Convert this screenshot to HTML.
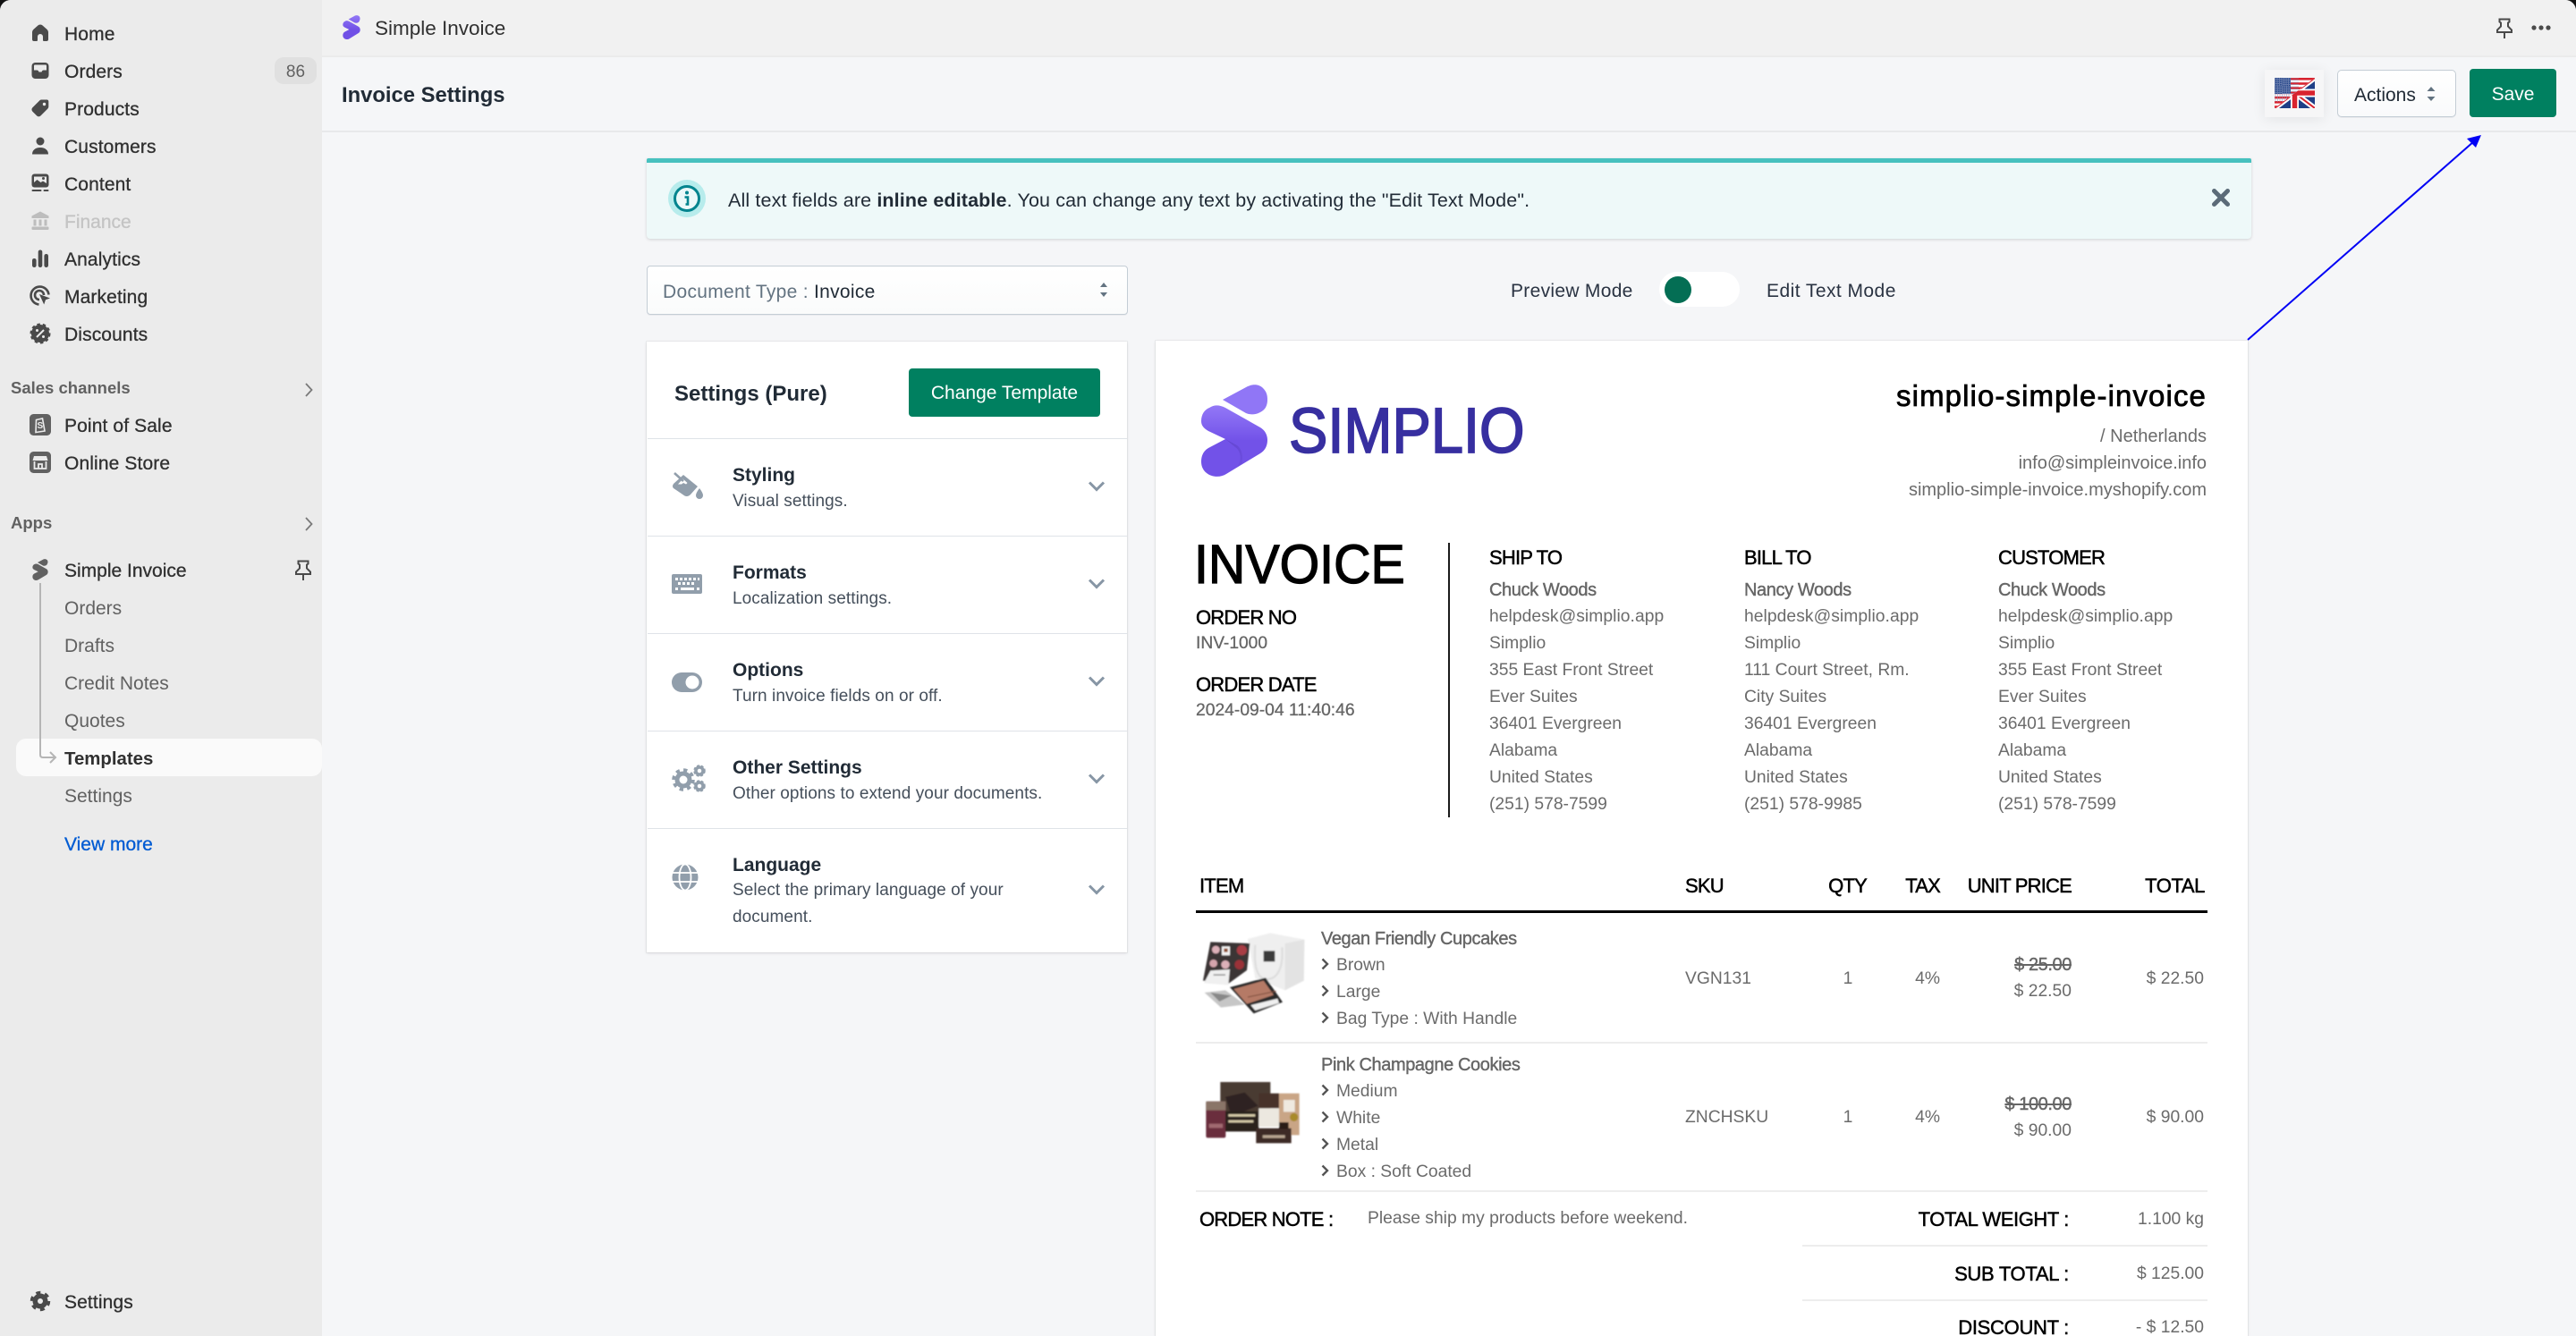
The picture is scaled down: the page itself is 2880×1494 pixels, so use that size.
<!DOCTYPE html>
<html lang="en"><head><meta charset="utf-8"><title>Invoice Settings</title>
<style>
*{box-sizing:border-box}
html,body{margin:0;padding:0;width:2880px;height:1494px;overflow:hidden;background:#111}
#app{position:absolute;left:0;top:0;width:2880px;height:1494px;background:#f5f6f8;border-radius:12px 12px 0 0;overflow:hidden;font-family:"Liberation Sans",sans-serif;color:#212b36}
.t{position:absolute;white-space:nowrap;line-height:40px;height:40px;margin-top:1.5px}
.b{position:absolute}
svg{position:absolute;overflow:visible}
.nav{font-size:21px;color:#303030;left:72px;letter-spacing:.12px;-webkit-text-stroke:.3px #303030}
.sub{font-size:21px;color:#616161;left:72px}
.sec{font-size:18.5px;font-weight:bold;color:#616161;left:12px}
.stit{font-size:21px;font-weight:bold;left:819px;color:#212b36}
.ssub{font-size:19px;left:819px;color:#454f5b;letter-spacing:.08px}
.h{font-size:22px;color:#000;-webkit-text-stroke:.5px #000;letter-spacing:-.8px}
.g{font-size:19.3px;color:#6b6b6b}
.g20{font-size:20px;color:#6b6b6b}
.gb{font-size:20px;color:#666;-webkit-text-stroke:.4px #666;letter-spacing:-.4px}
.r{text-align:right}
.div{position:absolute;height:2px;background:#ededed}
</style></head><body>
<div id="app">

<!-- sidebar -->
<div class="b" style="left:0;top:0;width:360px;height:1494px;background:#ebebeb"></div>

<svg style="left:33px;top:25px" width="24" height="24" viewBox="0 0 24 24"><path fill="#4a4a4a" d="M12 2.500c-1 0-1.900.4-2.600 1L4.600 7.700C3.400 8.800 3 10 3 11.400V19a2 2 0 0 0 2 2h3a1 1 0 0 0 1-1v-4a3 3 0 0 1 6 0v4a1 1 0 0 0 1 1h3a2 2 0 0 0 2-2v-7.600c0-1.400-.4-2.600-1.600-3.700L14.600 3.500c-.7-.6-1.600-1-2.600-1z"/></svg>
<div class="t nav" style="top:17px">Home</div>

<svg style="left:33px;top:67px" width="24" height="24" viewBox="0 0 24 24"><rect x="2.500" y="3" width="19" height="18" rx="4" fill="#4a4a4a"/><path fill="#ebebeb" d="M5 6.500a1 1 0 0 1 1-1h12a1 1 0 0 1 1 1v5h-3.500c-.8 0-1.200.5-1.500 1l-.5 1h-3l-.5-1c-.3-.5-.7-1-1.500-1H5z"/></svg>
<div class="t nav" style="top:59px">Orders</div>
<div class="b" style="left:307px;top:64px;width:47px;height:30px;border-radius:10px;background:#e0e0e0"></div>
<div class="t" style="left:307px;width:47px;top:59px;text-align:center;font-size:19px;color:#616161">86</div>

<svg style="left:33px;top:109px" width="24" height="24" viewBox="0 0 24 24"><path fill="#4a4a4a" d="M20 2.500h-6.500c-.9 0-1.700.3-2.300 1l-7.900 7.900a3 3 0 0 0 0 4.200l4.900 4.900a3 3 0 0 0 4.200 0l7.900-7.900c.6-.6 1-1.500 1-2.300V4.500a2 2 0 0 0-1.300-2z"/><circle cx="16.500" cy="7.500" r="1.700" fill="#ebebeb"/></svg>
<div class="t nav" style="top:101px">Products</div>

<svg style="left:33px;top:151px" width="24" height="24" viewBox="0 0 24 24"><circle cx="12" cy="7" r="4.500" fill="#4a4a4a"/><path fill="#4a4a4a" d="M3 21.500c0-4.500 3.500-7.500 9-7.500s9 3 9 7.500z"/></svg>
<div class="t nav" style="top:143px">Customers</div>

<svg style="left:33px;top:193px" width="24" height="24" viewBox="0 0 24 24"><rect x="2.500" y="1.500" width="19" height="15" rx="3" fill="#4a4a4a"/><path fill="#ebebeb" d="M5 11l3.500-3 4 3 2.500-1.500 4 2.500v-7.500H5z"/><circle cx="15.500" cy="6.500" r="1.500" fill="#4a4a4a"/><rect x="2.500" y="19" width="11" height="2" rx="1" fill="#4a4a4a"/><rect x="15.500" y="19" width="6" height="2" rx="1" fill="#4a4a4a"/></svg>
<div class="t nav" style="top:185px">Content</div>

<svg style="left:33px;top:235px" width="24" height="24" viewBox="0 0 24 24"><g fill="#bdbdbd"><path d="M12 1.500l9.500 5v2.500h-19V6.500z"/><rect x="2.500" y="18.500" width="19" height="3.500" rx="1"/><rect x="4.500" y="10.500" width="3" height="7"/><rect x="10.500" y="10.500" width="3" height="7"/><rect x="16.500" y="10.500" width="3" height="7"/></g></svg>
<div class="t" style="left:72px;top:227px;font-size:21px;color:#c4c4c4;-webkit-text-stroke:.3px #c4c4c4">Finance</div>

<svg style="left:33px;top:277px" width="24" height="24" viewBox="0 0 24 24"><g fill="#4a4a4a"><rect x="3" y="12" width="4.600" height="10" rx="2.300"/><rect x="9.700" y="2.500" width="4.600" height="19.500" rx="2.300"/><rect x="16.400" y="7" width="4.600" height="15" rx="2.300"/></g></svg>
<div class="t nav" style="top:269px">Analytics</div>

<svg style="left:33px;top:319px" width="24" height="24" viewBox="0 0 24 24"><path fill="none" stroke="#4a4a4a" stroke-width="2.600" d="M10.500 21.500A10 10 0 1 1 21.500 10.500"/><path fill="none" stroke="#4a4a4a" stroke-width="2.600" d="M11 16a5 5 0 1 1 5-5"/><path fill="#4a4a4a" d="M11 10l12 4.500-5 1.700-1.800 5.300z"/></svg>
<div class="t nav" style="top:311px">Marketing</div>

<svg style="left:33px;top:361px" width="24" height="24" viewBox="0 0 24 24"><circle cx="12" cy="12" r="10" fill="#4a4a4a"/><circle cx="12" cy="12" r="10.500" fill="none" stroke="#4a4a4a" stroke-width="2" stroke-dasharray="3.500 3"/><path stroke="#ebebeb" stroke-width="2" d="M8 16l8-8"/><circle cx="8.500" cy="8.500" r="1.500" fill="#ebebeb"/><circle cx="15.500" cy="15.500" r="1.500" fill="#ebebeb"/></svg>
<div class="t nav" style="top:353px">Discounts</div>

<div class="t sec" style="top:412px">Sales channels</div>
<svg style="left:339px;top:427px" width="12" height="18" viewBox="0 0 12 18"><path d="M3 2l6.500 7L3 16" fill="none" stroke="#7a7a7a" stroke-width="1.800"/></svg>

<svg style="left:33px;top:463px" width="24" height="24" viewBox="0 0 24 24"><rect width="24" height="24" rx="4.500" fill="#616161"/><path fill="none" stroke="#ebebeb" stroke-width="1.600" d="M7.500 6.500l7-1.500 2.500 14-10 1.500z"/><text x="8.500" y="16" font-size="10" font-weight="bold" fill="#ebebeb" font-family="Liberation Sans">S</text></svg>
<div class="t nav" style="top:455px">Point of Sale</div>

<svg style="left:33px;top:505px" width="24" height="24" viewBox="0 0 24 24"><rect width="24" height="24" rx="4.500" fill="#616161"/><path fill="#ebebeb" d="M5 5h14l1.500 5h-17z"/><path fill="none" stroke="#ebebeb" stroke-width="1.800" d="M5.500 11v8h13v-8M10 19v-5h4v5"/></svg>
<div class="t nav" style="top:497px">Online Store</div>

<div class="t sec" style="top:563px">Apps</div>
<svg style="left:339px;top:577px" width="12" height="18" viewBox="0 0 12 18"><path d="M3 2l6.500 7L3 16" fill="none" stroke="#7a7a7a" stroke-width="1.800"/></svg>

<svg style="left:36px;top:625px" width="18" height="24" viewBox="0 0 74 103"><path fill="#616161" d="M24 17L52 2Q62-2 70 5Q78 15 68 29Q60 36 50 32ZM0 41C0 33 4 28 9 26C15 22 21 23 27 26L66 48C71 51 74 56 74 62C74 69 71 74 66 77L28 100C22 104 12 104 6 99C1 95 0 90 0 86C0 79 3 74 8 71L27 61L8 52C3 49 0 46 0 41Z"/></svg>
<div class="t nav" style="top:617px;letter-spacing:0">Simple Invoice</div>
<svg style="left:327px;top:625px" width="24" height="26" viewBox="0 0 24 26"><path fill="none" stroke="#4a4a4a" stroke-width="2" d="M6.500 2.500h11v3l-1.500 1v4l4 4v2.500H4V14.500l4-4v-4l-1.500-1zM12 17v7"/></svg>

<div class="b" style="left:44px;top:652px;width:2px;height:192px;background:#b5b5b5"></div>
<div class="t sub" style="top:659px">Orders</div>
<div class="t sub" style="top:701px">Drafts</div>
<div class="t sub" style="top:743px">Credit Notes</div>
<div class="t sub" style="top:785px">Quotes</div>
<div class="b" style="left:18px;top:826px;width:342px;height:42px;background:#fafafa;border-radius:11px"></div>
<svg style="left:42px;top:826px" width="22" height="30" viewBox="0 0 22 30"><path fill="none" stroke="#b5b5b5" stroke-width="2" d="M3 0v18q0 3 3 3h14M14 15l6 6-6 6"/></svg>
<div class="t" style="left:72px;top:827px;font-size:20.4px;font-weight:bold;color:#303030">Templates</div>
<div class="t sub" style="top:869px">Settings</div>
<div class="t" style="left:72px;top:923px;font-size:21px;color:#005bd3;-webkit-text-stroke:.3px #005bd3">View more</div>

<svg style="left:33px;top:1443px" width="24" height="24" viewBox="0 0 24 24"><circle cx="12" cy="12" r="8.500" fill="#4a4a4a"/><circle cx="12" cy="12" r="9.500" fill="none" stroke="#4a4a4a" stroke-width="3.500" stroke-dasharray="5 4.950"/><circle cx="12" cy="12" r="3" fill="#ebebeb"/></svg>
<div class="t nav" style="top:1435px">Settings</div>

<!-- top bar -->
<div class="b" style="left:360px;top:0;width:2520px;height:64px;background:#f1f1f1;border-bottom:2px solid #ebebeb"></div>
<svg style="left:381px;top:17px" width="24" height="27" viewBox="0 0 74 103"><defs><linearGradient id="lg0" x1="0" y1="0" x2="0" y2="1"><stop offset="0" stop-color="#9278f6"/><stop offset=".6" stop-color="#7050e6"/></linearGradient></defs><path fill="url(#lg0)" d="M24 17L52 2Q62-2 70 5Q78 15 68 29Q60 36 50 32ZM0 41C0 33 4 28 9 26C15 22 21 23 27 26L66 48C71 51 74 56 74 62C74 69 71 74 66 77L28 100C22 104 12 104 6 99C1 95 0 90 0 86C0 79 3 74 8 71L27 61L8 52C3 49 0 46 0 41Z"/></svg>
<div class="t" style="left:419px;top:10px;font-size:22.5px;color:#303030">Simple Invoice</div>
<svg style="left:2788px;top:19px" width="24" height="26" viewBox="0 0 24 26"><path fill="none" stroke="#4a4a4a" stroke-width="2" d="M6.500 2.500h11v3l-1.500 1v4l4 4v2.500H4V14.500l4-4v-4l-1.500-1zM12 17v7"/></svg>
<svg style="left:2830px;top:26px" width="22" height="10" viewBox="0 0 22 10"><g fill="#4a4a4a"><circle cx="3" cy="5" r="2.600"/><circle cx="11" cy="5" r="2.600"/><circle cx="19" cy="5" r="2.600"/></g></svg>

<!-- page header -->
<div class="b" style="left:360px;top:146px;width:2520px;height:2px;background:#e8e9eb"></div>
<div class="t" style="left:382px;top:85px;font-size:23.8px;font-weight:bold;color:#212b36">Invoice Settings</div>

<div class="b" style="left:2532px;top:78px;width:66px;height:53px;background:#f6f6f7;box-shadow:0 2px 14px rgba(0,0,0,.08)"></div>
<svg style="left:2543px;top:87px" width="45" height="34" viewBox="0 0 45 34">
<defs><clipPath id="us"><polygon points="0,0 45,0 0,34"/></clipPath><clipPath id="uk"><polygon points="45,0 45,34 0,34"/></clipPath></defs>
<g clip-path="url(#uk)"><rect width="45" height="34" fill="#1f3f86"/><path d="M0 0L45 34M45 0L0 34" stroke="#fff" stroke-width="6"/><path d="M0 0L45 34M45 0L0 34" stroke="#d8232f" stroke-width="2"/><path d="M22.500 0v34M0 17h45" stroke="#fff" stroke-width="9"/><path d="M22.500 0v34M0 17h45" stroke="#d8232f" stroke-width="5.500"/></g>
<g clip-path="url(#us)"><rect width="45" height="34" fill="#fff"/><g fill="#d8232f"><rect width="45" height="2.600"/><rect y="5.200" width="45" height="2.600"/><rect y="10.400" width="45" height="2.600"/><rect y="15.600" width="45" height="2.600"/><rect y="20.800" width="45" height="2.600"/><rect y="26" width="45" height="2.600"/><rect y="31.200" width="45" height="2.600"/></g><rect width="18" height="18" fill="#2b4a8c"/><rect width="18" height="18" fill="none" stroke="#8d9cc2" stroke-width="18" stroke-dasharray="1 1.500" opacity=".6"/></g>
</svg>

<div class="b" style="left:2613px;top:78px;width:133px;height:53px;background:linear-gradient(#fff,#f9fafb);border:1px solid #c4cdd5;border-radius:5px;box-shadow:0 1px 0 rgba(22,29,37,.05)"></div>
<div class="t" style="left:2632px;top:85px;font-size:21px;color:#212b36">Actions</div>
<svg style="left:2711px;top:96px" width="14" height="18" viewBox="0 0 14 18"><path fill="#637381" d="M7 1l4.500 5h-9zM7 17l-4.500-5h9z"/></svg>
<div class="b" style="left:2761px;top:77px;width:97px;height:54px;background:#008060;border-radius:4px"></div>
<div class="t" style="left:2761px;width:97px;top:84px;text-align:center;font-size:21px;color:#fff">Save</div>

<!-- arrow -->
<svg style="left:0;top:0" width="2880" height="1494"><path d="M2513 380L2766 158" stroke="#0000f5" stroke-width="2" fill="none"/><path d="M2774 151L2758 155 2768 165z" fill="#0000f5"/></svg>

<!-- banner -->
<div class="b" style="left:723px;top:177px;width:1794px;height:90px;background:#eef9f9;border-top:5px solid #47c1bf;border-radius:2px 2px 4px 4px;box-shadow:0 1px 3px rgba(63,63,68,.2)"></div>
<svg style="left:747px;top:201px" width="42" height="42" viewBox="0 0 42 42"><circle cx="21" cy="21" r="21" fill="#b7ecec"/><circle cx="21" cy="21" r="13.500" fill="#ebf9f9" stroke="#00848e" stroke-width="3"/><circle cx="21" cy="14.500" r="2" fill="#00848e"/><path d="M18.500 19.500h3.500v8h-2.500" fill="none" stroke="#00848e" stroke-width="2.600"/></svg>
<div class="t" style="left:814px;top:202px;font-size:21.5px;letter-spacing:.13px;color:#212b36">All text fields are <b>inline editable</b>. You can change any text by activating the "Edit Text Mode".</div>
<svg style="left:2472px;top:210px" width="22" height="22" viewBox="0 0 22 22"><path d="M3.500 3.500l15 15M18.500 3.500l-15 15" stroke="#5b6b78" stroke-width="5" stroke-linecap="round"/></svg>

<!-- select -->
<div class="b" style="left:723px;top:297px;width:538px;height:55px;background:linear-gradient(#fff,#fafbfb);border:1px solid #c4cdd5;border-radius:4px;box-shadow:0 1px 0 rgba(22,29,37,.05)"></div>
<div class="t" style="left:741px;top:305px;font-size:21px;letter-spacing:.3px;color:#637381">Document Type : <span style="color:#212b36">Invoice</span></div>
<svg style="left:1228px;top:315px" width="12" height="18" viewBox="0 0 12 18"><path fill="#637381" d="M6 1l4 5H2zM6 17l-4-5h8z"/></svg>

<!-- toggle -->
<div class="t" style="left:1689px;top:304px;font-size:21px;letter-spacing:.3px;color:#2a3342">Preview Mode</div>
<div class="b" style="left:1855px;top:304px;width:90px;height:39px;background:#fff;border-radius:20px"></div>
<div class="b" style="left:1861px;top:309px;width:30px;height:30px;background:#046e54;border-radius:50%"></div>
<div class="t" style="left:1975px;top:304px;font-size:21px;letter-spacing:.45px;color:#2a3342">Edit Text Mode</div>

<!-- settings card -->
<div class="b" style="left:723px;top:382px;width:537px;height:683px;background:#fff;box-shadow:0 0 0 1px rgba(63,63,68,.05),0 1px 3px rgba(63,63,68,.15)"></div>
<div class="t" style="left:754px;top:419px;font-size:24px;font-weight:bold;color:#212b36">Settings (Pure)</div>
<div class="b" style="left:1016px;top:412px;width:214px;height:54px;background:#008060;border-radius:4px"></div>
<div class="t" style="left:1016px;width:214px;top:418px;text-align:center;font-size:21px;color:#fff">Change Template</div>
<div class="b" style="left:724px;top:490px;width:536px;height:1px;background:#dfe3e8"></div>
<div class="b" style="left:724px;top:599px;width:536px;height:1px;background:#dfe3e8"></div>
<div class="b" style="left:724px;top:708px;width:536px;height:1px;background:#dfe3e8"></div>
<div class="b" style="left:724px;top:817px;width:536px;height:1px;background:#dfe3e8"></div>
<div class="b" style="left:724px;top:926px;width:536px;height:1px;background:#dfe3e8"></div>

<div class="t stit" style="top:510px">Styling</div><div class="t ssub" style="top:539px">Visual settings.</div>
<div class="t stit" style="top:619px">Formats</div><div class="t ssub" style="top:648px">Localization settings.</div>
<div class="t stit" style="top:728px">Options</div><div class="t ssub" style="top:757px">Turn invoice fields on or off.</div>
<div class="t stit" style="top:837px">Other Settings</div><div class="t ssub" style="top:866px">Other options to extend your documents.</div>
<div class="t stit" style="top:946px">Language</div><div class="t ssub" style="top:974px">Select the primary language of your</div><div class="t ssub" style="top:1004px">document.</div>

<svg style="left:751px;top:528px" width="36" height="34" viewBox="0 0 36 34"><path fill="#919eab" d="M13 3l16 13-8 9q-3 3-6.500 1.500L2 18q-2-2 0-5z"/><path fill="#fff" d="M7 13.500l5.500-6 5 4.500-1.500 1.500-3-1.500-2 1.500z"/><path stroke="#919eab" stroke-width="2.600" d="M3 1l10 9"/><path fill="#919eab" d="M31 18s4 5 4 8a4 4 0 0 1-8 0c0-3 4-8 4-8z"/></svg>
<svg style="left:751px;top:642px" width="34" height="24" viewBox="0 0 34 24"><rect width="34" height="22" rx="2" fill="#919eab"/><g fill="#fff"><rect x="4" y="4" width="3" height="3"/><rect x="9" y="4" width="3" height="3"/><rect x="14" y="4" width="3" height="3"/><rect x="19" y="4" width="3" height="3"/><rect x="24" y="4" width="3" height="3"/><rect x="29" y="4" width="2" height="3"/><rect x="7" y="9" width="3" height="3"/><rect x="12" y="9" width="3" height="3"/><rect x="17" y="9" width="3" height="3"/><rect x="22" y="9" width="3" height="3"/><rect x="4" y="15" width="3" height="3"/><rect x="10" y="15" width="15" height="3"/><rect x="28" y="15" width="3" height="3"/></g></svg>
<svg style="left:751px;top:752px" width="34" height="23" viewBox="0 0 34 23"><rect width="34" height="22" rx="11" fill="#919eab"/><circle cx="23" cy="11" r="7.500" fill="#fff"/></svg>
<svg style="left:751px;top:855px" width="38" height="32" viewBox="0 0 38 32"><circle cx="13" cy="17" r="9.500" fill="#919eab"/><circle cx="13" cy="17" r="11" fill="none" stroke="#919eab" stroke-width="3.500" stroke-dasharray="4.300 4.300"/><circle cx="13" cy="17" r="4.500" fill="#fff"/><circle cx="31" cy="7" r="4" fill="none" stroke="#919eab" stroke-width="3.500"/><circle cx="31" cy="7" r="6" fill="none" stroke="#919eab" stroke-width="1.500" stroke-dasharray="3 2"/><circle cx="31" cy="24" r="4" fill="none" stroke="#919eab" stroke-width="3.500"/><circle cx="31" cy="24" r="6" fill="none" stroke="#919eab" stroke-width="1.500" stroke-dasharray="3 2"/></svg>
<svg style="left:751px;top:966px" width="30" height="30" viewBox="0 0 30 30"><circle cx="15" cy="15" r="14.500" fill="#919eab"/><g fill="none" stroke="#fff" stroke-width="1.800"><ellipse cx="15" cy="15" rx="6.500" ry="14.500"/><path d="M1 10h28M1 20h28"/></g></svg>

<svg style="left:1216px;top:537px" width="20" height="14" viewBox="0 0 20 14"><path d="M2 2.500l8 8 8-8" fill="none" stroke="#8796a5" stroke-width="3"/></svg>
<svg style="left:1216px;top:646px" width="20" height="14" viewBox="0 0 20 14"><path d="M2 2.500l8 8 8-8" fill="none" stroke="#8796a5" stroke-width="3"/></svg>
<svg style="left:1216px;top:755px" width="20" height="14" viewBox="0 0 20 14"><path d="M2 2.500l8 8 8-8" fill="none" stroke="#8796a5" stroke-width="3"/></svg>
<svg style="left:1216px;top:864px" width="20" height="14" viewBox="0 0 20 14"><path d="M2 2.500l8 8 8-8" fill="none" stroke="#8796a5" stroke-width="3"/></svg>
<svg style="left:1216px;top:988px" width="20" height="14" viewBox="0 0 20 14"><path d="M2 2.500l8 8 8-8" fill="none" stroke="#8796a5" stroke-width="3"/></svg>

<!-- invoice -->
<div class="b" style="left:1292px;top:381px;width:1221px;height:1113px;background:#fff;box-shadow:0 0 0 1px rgba(63,63,68,.05),0 1px 3px rgba(63,63,68,.12)"></div>

<svg style="left:1343px;top:430px" width="74" height="103" viewBox="0 0 74 103"><defs><linearGradient id="lg1" x1="0" y1="0" x2="0" y2="1"><stop offset="0" stop-color="#9378f7"/><stop offset=".5" stop-color="#7252e8"/><stop offset="1" stop-color="#7252e8"/></linearGradient><linearGradient id="lg2" x1="0" y1="0" x2="1" y2="1"><stop offset="0" stop-color="#5b3fc4"/><stop offset="1" stop-color="#7252e8"/></linearGradient></defs><path fill="#9076f6" d="M24 17L52 2C59-1 65 0 69 4C73 8 74 12 74 17C74 23 72 28 66 31C60 34 55 34 50 32Z"/><path fill="url(#lg1)" d="M0 41C0 33 4 28 9 26C15 22 21 23 27 26L66 48C71 51 74 56 74 62C74 69 71 74 66 77L28 100C22 104 12 104 6 99C1 95 0 90 0 86C0 79 3 74 8 71L27 61L8 52C3 49 0 46 0 41Z"/><path fill="url(#lg2)" d="M27 61L40 68C44 71 46 76 46 82V88L66 77 40 92C46 84 44 74 38 70Z" opacity=".7"/></svg>
<div class="t" style="left:1441px;top:441px;height:80px;line-height:80px;font-size:71px;color:#372fa0;transform:scaleX(.915);transform-origin:0 50%;-webkit-text-stroke:1.8px #372fa0">SIMPLIO</div>

<div class="t" style="right:413px;top:421px;font-size:33px;color:#000;letter-spacing:1.1px;-webkit-text-stroke:.75px #000">simplio-simple-invoice</div>
<div class="t g20 r" style="right:413px;top:466px">/ Netherlands</div>
<div class="t g20 r" style="right:413px;top:496px">info@simpleinvoice.info</div>
<div class="t g20 r" style="right:413px;top:526px">simplio-simple-invoice.myshopify.com</div>

<div class="t" style="left:1335px;top:599px;height:60px;line-height:60px;font-size:61px;color:#000;transform:scaleX(.94);transform-origin:0 50%;-webkit-text-stroke:1.3px #000">INVOICE</div>
<div class="t h" style="left:1337px;top:669px">ORDER NO</div>
<div class="t gb" style="left:1337px;top:698px;letter-spacing:0;font-size:19.2px;-webkit-text-stroke:.3px #666">INV-1000</div>
<div class="t h" style="left:1337px;top:744px">ORDER DATE</div>
<div class="t gb" style="left:1337px;top:773px;letter-spacing:0;font-size:19.3px;-webkit-text-stroke:.3px #666">2024-09-04 11:40:46</div>
<div class="b" style="left:1619px;top:607px;width:2px;height:307px;background:#1a1a1a"></div>

<div class="t h" style="left:1665px;top:602px">SHIP TO</div>
<div class="t gb" style="left:1665px;top:638px">Chuck Woods</div>
<div class="t g" style="left:1665px;top:668px;letter-spacing:.05px">helpdesk@simplio.app</div>
<div class="t g" style="left:1665px;top:698px">Simplio</div>
<div class="t g" style="left:1665px;top:728px">355 East Front Street</div>
<div class="t g" style="left:1665px;top:758px">Ever Suites</div>
<div class="t g" style="left:1665px;top:788px">36401 Evergreen</div>
<div class="t g" style="left:1665px;top:818px">Alabama</div>
<div class="t g" style="left:1665px;top:848px">United States</div>
<div class="t g" style="left:1665px;top:878px">(251) 578-7599</div>

<div class="t h" style="left:1950px;top:602px">BILL TO</div>
<div class="t gb" style="left:1950px;top:638px">Nancy Woods</div>
<div class="t g" style="left:1950px;top:668px;letter-spacing:.05px">helpdesk@simplio.app</div>
<div class="t g" style="left:1950px;top:698px">Simplio</div>
<div class="t g" style="left:1950px;top:728px">111 Court Street, Rm.</div>
<div class="t g" style="left:1950px;top:758px">City Suites</div>
<div class="t g" style="left:1950px;top:788px">36401 Evergreen</div>
<div class="t g" style="left:1950px;top:818px">Alabama</div>
<div class="t g" style="left:1950px;top:848px">United States</div>
<div class="t g" style="left:1950px;top:878px">(251) 578-9985</div>

<div class="t h" style="left:2234px;top:602px">CUSTOMER</div>
<div class="t gb" style="left:2234px;top:638px">Chuck Woods</div>
<div class="t g" style="left:2234px;top:668px;letter-spacing:.05px">helpdesk@simplio.app</div>
<div class="t g" style="left:2234px;top:698px">Simplio</div>
<div class="t g" style="left:2234px;top:728px">355 East Front Street</div>
<div class="t g" style="left:2234px;top:758px">Ever Suites</div>
<div class="t g" style="left:2234px;top:788px">36401 Evergreen</div>
<div class="t g" style="left:2234px;top:818px">Alabama</div>
<div class="t g" style="left:2234px;top:848px">United States</div>
<div class="t g" style="left:2234px;top:878px">(251) 578-7599</div>

<!-- table -->
<div class="t h" style="left:1341px;top:969px">ITEM</div>
<div class="t h" style="left:1884px;top:969px">SKU</div>
<div class="t h r" style="right:793px;top:969px">QTY</div>
<div class="t h r" style="right:711px;top:969px">TAX</div>
<div class="t h r" style="right:564px;top:969px">UNIT PRICE</div>
<div class="t h r" style="right:415px;top:969px;letter-spacing:-.4px">TOTAL</div>
<div class="b" style="left:1337px;top:1018px;width:1131px;height:3px;background:#000"></div>
<div class="div" style="left:1337px;top:1165px;width:1131px"></div>
<div class="div" style="left:1337px;top:1331px;width:1131px"></div>

<!-- product images, coordinates follow a 3x view of the table area -->
<svg style="left:1320px;top:1000px" width="500" height="340" viewBox="0 0 1500 1020">
<defs><filter id="bl"><feGaussianBlur stdDeviation="2"/></filter></defs>
<g filter="url(#bl)">
<path d="M225 150L300 130 415 152 413 290 350 322 250 282z" fill="#efefef"/>
<path d="M350 165L415 152 413 290 350 322z" fill="#e3e3e3"/>
<path d="M250 170C245 240 255 285 290 285C325 285 345 245 340 178" fill="none" stroke="#dedede" stroke-width="7"/>
<rect x="278" y="190" width="38" height="36" fill="#3a3a3a"/>
<path d="M100 160L232 165 222 255 160 300 75 290z" fill="#3b3536"/>
<circle cx="118" cy="186" r="13" fill="#dcb0b8"/><circle cx="150" cy="236" r="14" fill="#dcb0b8"/><circle cx="110" cy="232" r="13" fill="#d4a4ac"/>
<circle cx="205" cy="188" r="17" fill="#a83c44"/><circle cx="197" cy="236" r="16" fill="#9a3038"/>
<rect x="138" y="175" width="27" height="30" fill="#f4f4f4"/><rect x="145" y="182" width="13" height="12" fill="#8a4a2a"/>
<path d="M100 256L165 252 160 305 78 298z" fill="#f0f0f0"/><rect x="110" y="268" width="40" height="5" fill="#999"/>
<path d="M80 330L150 322 215 370 135 380z" fill="#c6c6c6"/><path d="M100 330L170 340 130 360z" fill="#888"/>
<path d="M165 312L285 280 342 362 245 400z" fill="#2a2a2a"/>
<path d="M178 318L278 290 312 338 222 368z" fill="#b57a66"/>
<path d="M225 345L320 325" stroke="#7a4a3a" stroke-width="3"/>
<path d="M235 372L325 350 330 365 250 390z" fill="#efefef"/>
</g>
<g filter="url(#bl)">
<rect x="133" y="630" width="168" height="120" fill="#4a3a33"/>
<path d="M150 680L215 665 260 710 170 745z" fill="#2f2420"/>
<rect x="85" y="695" width="66" height="122" rx="6" fill="#6b2d3c"/>
<rect x="85" y="695" width="66" height="30" fill="#8a7468"/><rect x="95" y="770" width="46" height="14" fill="#a06a70"/>
<rect x="150" y="728" width="112" height="68" fill="#2a211d"/>
<rect x="160" y="738" width="90" height="8" fill="#d6cba8"/><rect x="160" y="758" width="84" height="8" fill="#d6cba8"/>
<rect x="262" y="668" width="68" height="50" fill="#463329"/>
<rect x="262" y="718" width="68" height="62" fill="#ece8e0"/>
<rect x="330" y="668" width="68" height="140" fill="#c9a586"/>
<rect x="345" y="690" width="38" height="40" fill="#efe9e0"/>
<circle cx="380" cy="748" r="14" fill="#a98a2c"/>
<rect x="253" y="785" width="118" height="50" fill="#3c2a25"/>
<rect x="275" y="808" width="75" height="10" fill="#b5a38f"/>
<rect x="330" y="765" width="32" height="22" fill="#2a1c18"/>
</g>
</svg>

<div class="t gb" style="left:1477px;top:1028px">Vegan Friendly Cupcakes</div>
<svg style="left:1477px;top:1071px" width="9" height="14" viewBox="0 0 9 14"><path d="M1.500 1.500L7 7l-5.500 5.500" fill="none" stroke="#555" stroke-width="2.400"/></svg>
<div class="t g" style="left:1494px;top:1058px">Brown</div>
<svg style="left:1477px;top:1101px" width="9" height="14" viewBox="0 0 9 14"><path d="M1.500 1.500L7 7l-5.500 5.500" fill="none" stroke="#555" stroke-width="2.400"/></svg>
<div class="t g" style="left:1494px;top:1088px">Large</div>
<svg style="left:1477px;top:1131px" width="9" height="14" viewBox="0 0 9 14"><path d="M1.500 1.500L7 7l-5.500 5.500" fill="none" stroke="#555" stroke-width="2.400"/></svg>
<div class="t g" style="left:1494px;top:1118px">Bag Type : With Handle</div>

<div class="t gb" style="left:1477px;top:1169px">Pink Champagne Cookies</div>
<svg style="left:1477px;top:1212px" width="9" height="14" viewBox="0 0 9 14"><path d="M1.500 1.500L7 7l-5.500 5.500" fill="none" stroke="#555" stroke-width="2.400"/></svg>
<div class="t g" style="left:1494px;top:1199px">Medium</div>
<svg style="left:1477px;top:1242px" width="9" height="14" viewBox="0 0 9 14"><path d="M1.500 1.500L7 7l-5.500 5.500" fill="none" stroke="#555" stroke-width="2.400"/></svg>
<div class="t g" style="left:1494px;top:1229px">White</div>
<svg style="left:1477px;top:1272px" width="9" height="14" viewBox="0 0 9 14"><path d="M1.500 1.500L7 7l-5.500 5.500" fill="none" stroke="#555" stroke-width="2.400"/></svg>
<div class="t g" style="left:1494px;top:1259px">Metal</div>
<svg style="left:1477px;top:1302px" width="9" height="14" viewBox="0 0 9 14"><path d="M1.500 1.500L7 7l-5.500 5.500" fill="none" stroke="#555" stroke-width="2.400"/></svg>
<div class="t g" style="left:1494px;top:1289px">Box : Soft Coated</div>

<div class="t g" style="left:1884px;top:1073px">VGN131</div>
<div class="t g" style="left:2046px;width:40px;text-align:center;top:1073px">1</div>
<div class="t g r" style="right:711px;top:1073px">4%</div>
<div class="t gb r" style="right:564px;top:1057px;text-decoration:line-through">$ 25.00</div>
<div class="t g r" style="right:564px;top:1087px">$ 22.50</div>
<div class="t g r" style="right:416px;top:1073px">$ 22.50</div>

<div class="t g" style="left:1884px;top:1228px">ZNCHSKU</div>
<div class="t g" style="left:2046px;width:40px;text-align:center;top:1228px">1</div>
<div class="t g r" style="right:711px;top:1228px">4%</div>
<div class="t gb r" style="right:564px;top:1213px;text-decoration:line-through">$ 100.00</div>
<div class="t g r" style="right:564px;top:1243px">$ 90.00</div>
<div class="t g r" style="right:416px;top:1228px">$ 90.00</div>

<div class="t h" style="left:1341px;top:1342px">ORDER NOTE :</div>
<div class="t g" style="left:1529px;top:1341px">Please ship my products before weekend.</div>
<div class="t h r" style="right:567px;top:1342px;letter-spacing:-.4px">TOTAL WEIGHT :</div>
<div class="t g r" style="right:416px;top:1342px">1.100 kg</div>
<div class="div" style="left:2015px;top:1392px;width:453px"></div>
<div class="t h r" style="right:567px;top:1403px;letter-spacing:-.3px">SUB TOTAL :</div>
<div class="t g r" style="right:416px;top:1403px">$ 125.00</div>
<div class="div" style="left:2015px;top:1453px;width:453px"></div>
<div class="t h r" style="right:567px;top:1463px;letter-spacing:-.3px">DISCOUNT :</div>
<div class="t g r" style="right:416px;top:1463px">- $ 12.50</div>

</div>
</body></html>
